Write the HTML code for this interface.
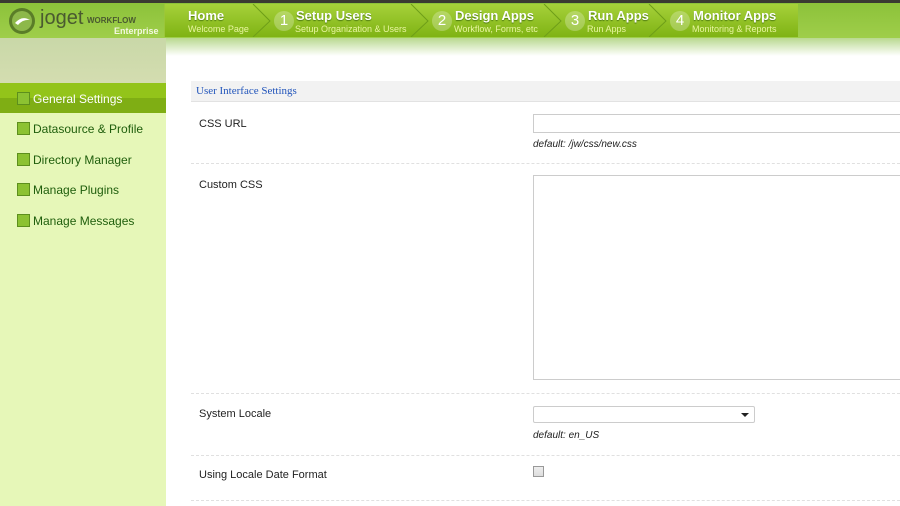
<!DOCTYPE html>
<html><head><style>
*{margin:0;padding:0;box-sizing:border-box}
body{width:900px;height:506px;overflow:hidden;background:#fff;font-family:"Liberation Sans",sans-serif;position:relative}
.top{position:absolute;left:0;top:0;width:900px;height:3px;background:#3a3a32}
.hdr{position:absolute;left:0;top:3px;width:900px;height:35px;background:linear-gradient(#8cc23a,#9fce4a)}
.shadow{position:absolute;left:0;top:38px;width:900px;height:18px;background:linear-gradient(#b9d98f,#fff)}
.nav{position:absolute;left:164px;top:4px;width:634px;height:33px;background:linear-gradient(#a6d13a,#7fb314);border-left:1px solid #9bc63a}
.it{position:absolute;top:0;height:33px;color:#fff}
.it b{position:absolute;top:4px;font-size:13px;text-shadow:0 1px 1px #4d7a10;white-space:nowrap}
.it i{position:absolute;top:20px;font-style:normal;font-size:9px;color:#e8f5a0;white-space:nowrap}
.num{position:absolute;top:7px;width:20px;height:20px;border-radius:50%;background:rgba(255,255,255,.25);font-size:15px;text-align:center;line-height:20px;color:#fff}
.side{position:absolute;left:0;top:38px;width:166px;height:468px;background:#e6f7b8}
.sidetop{position:absolute;left:0;top:38px;width:166px;height:45px;background:linear-gradient(#c9d8a8,#d4ddb0)}
.act{position:absolute;left:0;top:83px;width:166px;height:30px;background:linear-gradient(#93c41a 0,#93c41a 50%,#7fae14 50%)}
.mi{position:absolute;left:17px;font-size:12px;color:#1f5e0c;height:14px;line-height:14px}
.mi span{display:inline-block;width:13px;height:13px;background:#8cc232;border:1px solid #5d8f1d;vertical-align:-2px;margin-right:3px}
.sec{position:absolute;left:191px;top:81px;width:709px;height:21px;background:#f2f2f2;border-bottom:1px solid #e2e2e2;font-family:"Liberation Serif",serif;font-size:11px;color:#2255bb;padding:4px 0 0 5px}
.lab{position:absolute;left:199px;font-size:11px;color:#222}
.line{position:absolute;left:191px;width:709px;border-top:1px dashed #e0e0e0}
.def{position:absolute;left:533px;font-size:10px;font-style:italic;color:#222}
</style></head><body>
<div class="top"></div><div class="hdr"></div><div class="shadow"></div>
<svg style="position:absolute;left:8px;top:7px" width="28" height="28"><circle cx="14" cy="14" r="13" fill="#5a7d28"/><circle cx="14" cy="14" r="10" fill="#8db84a"/><path d="M7 16 Q14 8 22 13 Q15 12 10 18Z" fill="#fff"/></svg>
<div style="position:absolute;left:40px;top:7px;font-size:20px;color:#4a5a30">joget</div>
<div style="position:absolute;left:87px;top:16px;font-size:8px;font-weight:bold;color:#4a5a30">WORKFLOW</div>
<div style="position:absolute;left:114px;top:26px;font-size:9px;font-weight:bold;color:#f3f8e0">Enterprise</div>
<div class="nav">
<svg style="position:absolute;left:0;top:0" width="634" height="33"><g fill="none" stroke="#6e9e18" stroke-width="1"><path d="M88 0 L105 17 L88 33"/><path d="M246 0 L263 17 L246 33"/><path d="M379 0 L396 17 L379 33"/><path d="M484 0 L501 17 L484 33"/></g></svg>
<div class="it" style="left:23px"><b>Home</b><i>Welcome Page</i></div>
<div class="it" style="left:109px"><div class="num">1</div><b style="left:22px">Setup Users</b><i style="left:21px">Setup Organization &amp; Users</i></div>
<div class="it" style="left:267px"><div class="num">2</div><b style="left:23px">Design Apps</b><i style="left:22px">Workflow, Forms, etc</i></div>
<div class="it" style="left:400px"><div class="num">3</div><b style="left:23px">Run Apps</b><i style="left:22px">Run Apps</i></div>
<div class="it" style="left:505px"><div class="num">4</div><b style="left:23px">Monitor Apps</b><i style="left:22px">Monitoring &amp; Reports</i></div>
</div>
<div class="side"></div><div class="sidetop"></div><div class="act"></div>
<div class="mi" style="top:92px;color:#fff"><span></span>General Settings</div>
<div class="mi" style="top:122px"><span></span>Datasource &amp; Profile</div>
<div class="mi" style="top:153px"><span></span>Directory Manager</div>
<div class="mi" style="top:183px"><span></span>Manage Plugins</div>
<div class="mi" style="top:214px"><span></span>Manage Messages</div>
<div class="sec">User Interface Settings</div>
<div class="lab" style="top:118px">CSS URL</div>
<div style="position:absolute;left:533px;top:114px;width:380px;height:19px;border:1px solid #ccc"></div>
<div class="def" style="top:139px">default: /jw/css/new.css</div>
<div class="line" style="top:163px"></div>
<div class="lab" style="top:179px">Custom CSS</div>
<div style="position:absolute;left:533px;top:175px;width:380px;height:205px;border:1px solid #ccc"></div>
<div class="line" style="top:393px"></div>
<div class="lab" style="top:408px">System Locale</div>
<div style="position:absolute;left:533px;top:406px;width:222px;height:17px;border:1px solid #ccc;border-radius:2px"><div style="position:absolute;right:5px;top:6px;border:4px solid transparent;border-top:4px solid #222;border-bottom:0"></div></div>
<div class="def" style="top:430px">default: en_US</div>
<div class="line" style="top:455px"></div>
<div class="lab" style="top:469px">Using Locale Date Format</div>
<div style="position:absolute;left:533px;top:466px;width:11px;height:11px;border:1px solid #999;background:linear-gradient(#eee,#ddd)"></div>
<div class="line" style="top:500px"></div>
</body></html>
